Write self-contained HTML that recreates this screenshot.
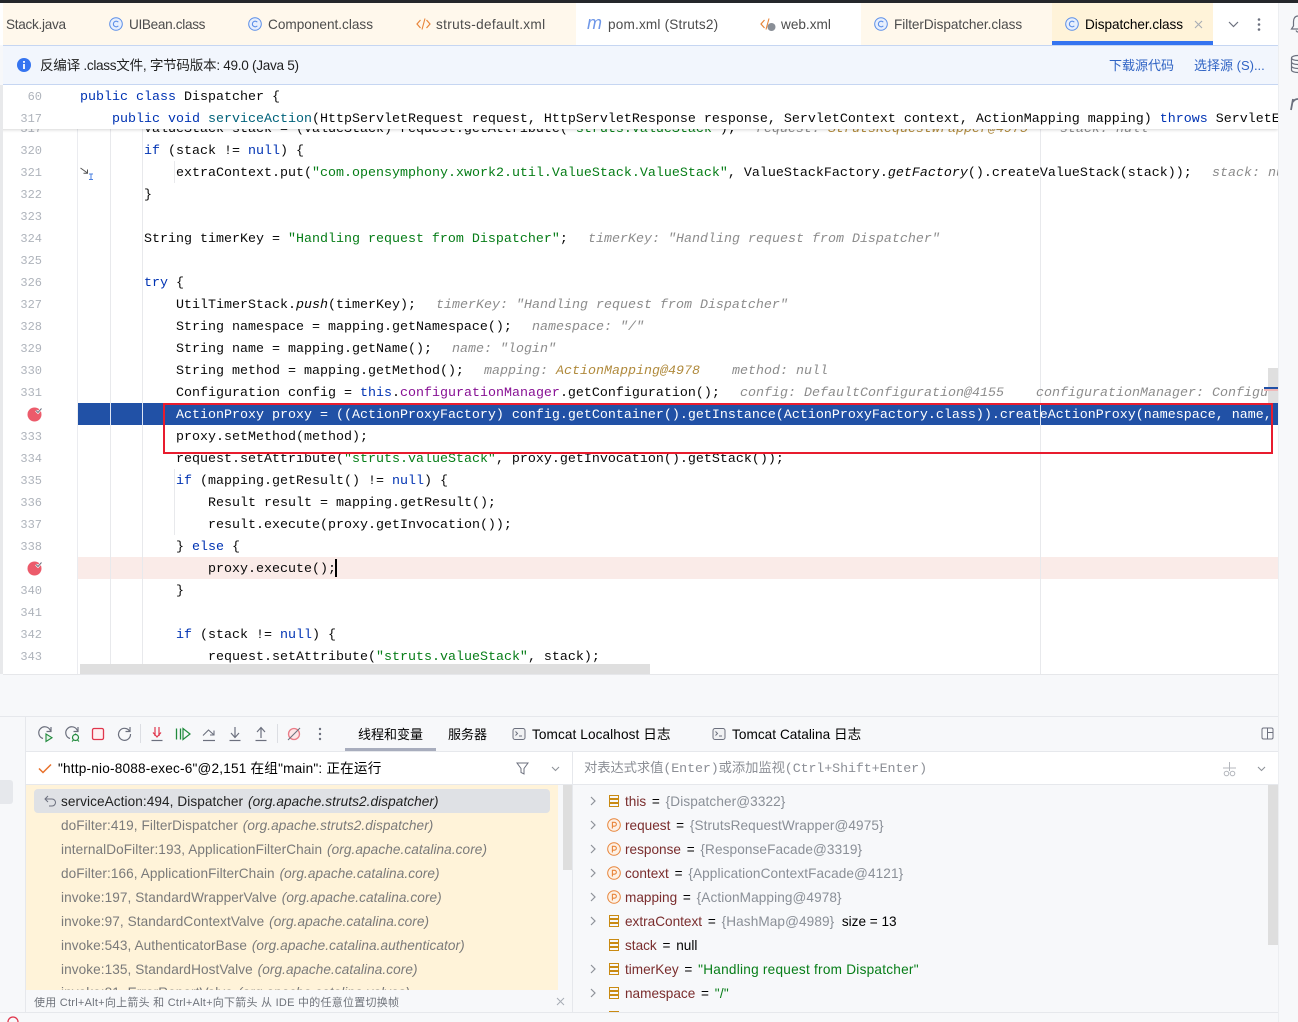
<!DOCTYPE html>
<html><head><meta charset="utf-8"><style>
html,body{margin:0;padding:0}
body{width:1298px;height:1022px;overflow:hidden;position:relative;background:#f7f8fa;font-family:"Liberation Sans","Noto Sans CJK SC",sans-serif;font-size:13.6px;color:#1f1f1f}
.a{position:absolute}
.t{position:absolute;white-space:pre;line-height:20px;height:20px;margin-top:1px}
.c{position:absolute;left:0;white-space:pre;font-family:"Liberation Mono",monospace;font-size:13.333px;line-height:22px;height:22px;color:#080808;margin-top:2px}
.n{position:absolute;left:3px;width:39px;text-align:right;font-family:"Liberation Mono",monospace;font-size:12px;line-height:22px;color:#aeb3bb;margin-top:1px}
.h{position:absolute;font-style:italic;color:#8c8c8c}
.k{color:#0033b3}.s{color:#067d17}.f{color:#871094}.d{color:#00627a}.i{font-style:italic}.o{color:#b08a3c}
.fr{position:absolute;left:61px;white-space:pre;line-height:20px;color:#7a7a7a;margin-top:1px;letter-spacing:.08px}
.fr i{margin-left:1px}
.vr{position:absolute;left:625px;white-space:pre;line-height:20px;color:#000;margin-top:1px}
.vr b{font-weight:normal;color:#7a2d2d;margin-right:2px}.vr u{text-decoration:none;color:#8a8f97;margin-left:2px;letter-spacing:.1px}.vr em{font-style:normal;color:#067d17;margin-left:2px;letter-spacing:.25px}.vr span{margin-left:2px}
svg{position:absolute;overflow:visible}
</style></head><body>
<svg width="0" height="0" style="position:absolute"><defs>
<symbol id="cl" viewBox="0 0 14 14"><circle cx="7" cy="7" r="6.3" fill="#e7effd" stroke="#5b8ee8" stroke-width="1"/><path d="M9.3 5.2A2.8 2.8 0 1 0 9.3 8.8" fill="none" stroke="#5b8ee8" stroke-width="1.1"/></symbol>
<symbol id="fld" viewBox="0 0 14 14"><path d="M2.5 1.5h9v3h-9zM2.5 5.5h9v3h-9zM2.5 9.5h9v3h-9z" fill="none" stroke="#c98a12" stroke-width="1"/></symbol>
<symbol id="par" viewBox="0 0 14 14"><circle cx="7" cy="7" r="6.3" fill="#fdf1e6" stroke="#e8853a" stroke-width="1"/><path d="M5.4 10.5V4.3h2a1.9 1.9 0 0 1 0 3.9h-2" fill="none" stroke="#e8853a" stroke-width="1.1"/></symbol>
<symbol id="chev" viewBox="0 0 10 10"><path d="M3 1l4 4-4 4" fill="none" stroke="#8e9299" stroke-width="1.2"/></symbol>
<symbol id="term" viewBox="0 0 14 14"><rect x="1" y="1.5" width="12" height="11" rx="2" fill="#f0f1f3" stroke="#6c707e"/><path d="M3.5 4.5l2 2-2 2M7 9h3" fill="none" stroke="#6c707e"/></symbol>
<symbol id="bp" viewBox="0 0 16 16"><circle cx="7.5" cy="8.5" r="7" fill="#ec5b6b"/><path d="M9 4.5l2 2 3.5-4" fill="none" stroke="#fff" stroke-width="2.4"/><path d="M9 4.5l2 2 3.5-4" fill="none" stroke="#6c707e" stroke-width="1"/></symbol>
</defs></svg>

<!-- top bar -->
<div class="a" style="left:0;top:0;width:1298px;height:3px;background:#25272b"></div>
<div class="a" style="left:0;top:3px;width:1278px;height:42px;background:#fff"></div>
<div class="a" style="left:3px;top:3px;width:573px;height:42px;background:#fff8ec"></div>
<div class="a" style="left:861px;top:3px;width:191px;height:42px;background:#fff8ec"></div>
<div class="a" style="left:1052px;top:3px;width:161px;height:42px;background:#fff3d9"></div>
<div class="a" style="left:1052px;top:41px;width:161px;height:4px;background:#3574f0"></div>
<div class="a" style="left:3px;top:45px;width:1275px;height:1px;background:#c6d6f2"></div>
<div class="t" style="left:6px;top:14px;color:#4c4c4c;letter-spacing:-.3px">Stack.java</div>
<svg style="left:109px;top:17px" width="14" height="14"><use href="#cl"/></svg><div class="t" style="left:129px;top:14px;color:#4c4c4c;letter-spacing:-.33px">UIBean.class</div>
<svg style="left:248px;top:17px" width="14" height="14"><use href="#cl"/></svg><div class="t" style="left:268px;top:14px;color:#4c4c4c">Component.class</div>
<svg style="left:416px;top:17px" width="15" height="14"><path d="M4.5 3L1 7l3.5 4M10.5 3L14 7l-3.500 4" fill="none" stroke="#e8853a" stroke-width="1.2"/><path d="M9 1.5L6 12.5" stroke="#e8853a" stroke-width="1.1"/></svg><div class="t" style="left:436px;top:14px;color:#4c4c4c;letter-spacing:.33px">struts-default.xml</div>
<div class="t" style="left:587px;top:12px;color:#6f97e8;font-style:italic;font-size:18px">m</div><div class="t" style="left:608px;top:14px;color:#4c4c4c;letter-spacing:.18px">pom.xml (Struts2)</div>
<svg style="left:760px;top:17px" width="17" height="15"><path d="M4.5 3L1 7l3.500 4" fill="none" stroke="#e8853a" stroke-width="1.2"/><path d="M9 1.5L6 12.5" stroke="#e8853a" stroke-width="1.1"/><circle cx="11.500" cy="10" r="4" fill="#8a8f97"/></svg><div class="t" style="left:781px;top:14px;color:#4c4c4c">web.xml</div>
<svg style="left:874px;top:17px" width="14" height="14"><use href="#cl"/></svg><div class="t" style="left:894px;top:14px;color:#4c4c4c;letter-spacing:-.05px">FilterDispatcher.class</div>
<svg style="left:1065px;top:17px" width="14" height="14"><use href="#cl"/></svg><div class="t" style="left:1085px;top:14px;color:#000;letter-spacing:-.06px">Dispatcher.class</div>
<svg style="left:1194px;top:20px" width="9" height="9"><path d="M1 1l7 7M8 1l-7 7" stroke="#a8adb5" stroke-width="1.1"/></svg>
<svg style="left:1228px;top:21px" width="11" height="7"><path d="M1 1l4.500 4.500L10 1" fill="none" stroke="#6c707e" stroke-width="1.2"/></svg>
<svg style="left:1257px;top:17px" width="4" height="15"><circle cx="2" cy="2.500" r="1.300" fill="#6c707e"/><circle cx="2" cy="7.500" r="1.300" fill="#6c707e"/><circle cx="2" cy="12.500" r="1.300" fill="#6c707e"/></svg>

<!-- right stripe -->
<div class="a" style="left:1278px;top:3px;width:20px;height:1019px;background:#f7f8fa;border-left:1px solid #eceef1;box-sizing:border-box"></div>
<svg style="left:1290px;top:15px" width="8" height="100"><path d="M8 1C5 1 3.500 3.500 3.500 6.500v4.500L1.500 14h6.500M6 15.500c.5 1 1 1.500 2 1.500" fill="none" stroke="#6c707e" stroke-width="1.2"/><path d="M8 40.500C4.500 40.500 1.500 41.500 1.500 43v12c0 1.500 3 2.500 6.500 2.500M1.500 43c0 1.500 3 2.500 6.500 2.500M1.500 47c0 1.500 3 2.500 6.500 2.500M1.500 51c0 1.500 3 2.500 6.500 2.500" fill="none" stroke="#6c707e" stroke-width="1.200"/><path d="M1 95l2-11M3 87c1-2 3-3 5-3" fill="none" stroke="#6c707e" stroke-width="1.800"/></svg>

<!-- banner -->
<div class="a" style="left:3px;top:46px;width:1275px;height:38px;background:#f2f6fd"></div>
<div class="a" style="left:3px;top:84px;width:1275px;height:1px;background:#c6d6f2"></div>
<svg style="left:17px;top:58px" width="14" height="14"><circle cx="7" cy="7" r="7" fill="#3574f0"/><rect x="6.100" y="6" width="1.800" height="5" fill="#fff"/><rect x="6.100" y="3" width="1.800" height="1.800" fill="#fff"/></svg>
<div class="t" style="left:40px;top:55px;color:#1f1f1f;letter-spacing:-.3px">反编译 .class文件, 字节码版本: 49.0 (Java 5)</div>
<div class="t" style="left:1109px;top:55px;color:#2f63c4;font-size:13px">下载源代码</div>
<div class="t" style="left:1194px;top:55px;color:#2f63c4;font-size:13px">选择源 (S)...</div>

<!-- editor -->
<div class="a" style="left:0;top:85px;width:3px;height:589px;background:#e8e9eb"></div>
<div id="ed" class="a" style="left:3px;top:85px;width:1275px;height:589px;background:#fff;overflow:hidden;border-bottom:1px solid #e6e7ea;box-sizing:content-box">
<div style="position:absolute;left:-3px;top:-85px;width:1278px;height:1022px">
<div class="a" style="left:78px;top:403px;width:1200px;height:22px;background:#2151a6"></div>
<div class="a" style="left:78px;top:557px;width:1200px;height:22px;background:#faebe8"></div>
<div class="a" style="left:77px;top:85px;width:1px;height:589px;background:#ebecf0"></div>
<div class="a" style="left:110px;top:85px;width:1px;height:589px;background:#e8e9ec"></div>
<div class="a" style="left:142px;top:85px;width:1px;height:589px;background:#e8e9ec"></div>
<div class="a" style="left:174px;top:161px;width:1px;height:22px;background:#e8e9ec"></div>
<div class="a" style="left:174px;top:469px;width:1px;height:66px;background:#e8e9ec"></div>
<div class="a" style="left:1040px;top:85px;width:1px;height:589px;background:#e8e9ec"></div>
<div class="a" style="left:110px;top:403px;width:1px;height:22px;background:#dfe6f5"></div>
<div class="a" style="left:142px;top:403px;width:1px;height:22px;background:#dfe6f5"></div>
<div class="a" style="left:1040px;top:403px;width:1px;height:22px;background:#dfe6f5"></div>

<div class="n" style="top:117px">317</div><div class="c" style="left:144px;top:117px">ValueStack stack = (ValueStack) request.getAttribute(<span class="s">"struts.valueStack"</span>);</div><div class="c h" style="left:756px;top:117px">request: <span class="o">StrutsRequestWrapper@4975</span></div><div class="c h" style="left:1060px;top:117px">stack: null</div>
<div class="n" style="top:139px">320</div><div class="c" style="left:144px;top:139px"><span class="k">if</span> (stack != <span class="k">null</span>) {</div>
<div class="n" style="top:161px">321</div><div class="c" style="left:176px;top:161px">extraContext.put(<span class="s">"com.opensymphony.xwork2.util.ValueStack.ValueStack"</span>, ValueStackFactory.<span class="i">getFactory</span>().createValueStack(stack));</div><div class="c h" style="left:1212px;top:161px">stack: null</div>
<div class="n" style="top:183px">322</div><div class="c" style="left:144px;top:183px">}</div>
<div class="n" style="top:205px">323</div>
<div class="n" style="top:227px">324</div><div class="c" style="left:144px;top:227px">String timerKey = <span class="s">"Handling request from Dispatcher"</span>;</div><div class="c h" style="left:588px;top:227px">timerKey: "Handling request from Dispatcher"</div>
<div class="n" style="top:249px">325</div>
<div class="n" style="top:271px">326</div><div class="c" style="left:144px;top:271px"><span class="k">try</span> {</div>
<div class="n" style="top:293px">327</div><div class="c" style="left:176px;top:293px">UtilTimerStack.<span class="i">push</span>(timerKey);</div><div class="c h" style="left:436px;top:293px">timerKey: "Handling request from Dispatcher"</div>
<div class="n" style="top:315px">328</div><div class="c" style="left:176px;top:315px">String namespace = mapping.getNamespace();</div><div class="c h" style="left:532px;top:315px">namespace: "/"</div>
<div class="n" style="top:337px">329</div><div class="c" style="left:176px;top:337px">String name = mapping.getName();</div><div class="c h" style="left:452px;top:337px">name: "login"</div>
<div class="n" style="top:359px">330</div><div class="c" style="left:176px;top:359px">String method = mapping.getMethod();</div><div class="c h" style="left:484px;top:359px">mapping: <span class="o">ActionMapping@4978</span></div><div class="c h" style="left:732px;top:359px">method: null</div>
<div class="n" style="top:381px">331</div><div class="c" style="left:176px;top:381px">Configuration config = <span class="k">this</span>.<span class="f">configurationManager</span>.getConfiguration();</div><div class="c h" style="left:740px;top:381px">config: DefaultConfiguration@4155</div><div class="c h" style="left:1036px;top:381px">configurationManager: Configuration</div>
<svg style="left:27px;top:406px" width="16" height="16"><use href="#bp"/></svg>
<div class="c" style="left:176px;top:403px;color:#fff">ActionProxy proxy = ((ActionProxyFactory) config.getContainer().getInstance(ActionProxyFactory.class)).createActionProxy(namespace, name,</div>
<div class="n" style="top:425px">333</div><div class="c" style="left:176px;top:425px">proxy.setMethod(method);</div>
<div class="n" style="top:447px">334</div><div class="c" style="left:176px;top:447px">request.setAttribute(<span class="s">"struts.valueStack"</span>, proxy.getInvocation().getStack());</div>
<div class="n" style="top:469px">335</div><div class="c" style="left:176px;top:469px"><span class="k">if</span> (mapping.getResult() != <span class="k">null</span>) {</div>
<div class="n" style="top:491px">336</div><div class="c" style="left:208px;top:491px">Result result = mapping.getResult();</div>
<div class="n" style="top:513px">337</div><div class="c" style="left:208px;top:513px">result.execute(proxy.getInvocation());</div>
<div class="n" style="top:535px">338</div><div class="c" style="left:176px;top:535px">} <span class="k">else</span> {</div>
<svg style="left:27px;top:560px" width="16" height="16"><use href="#bp"/></svg>
<div class="c" style="left:208px;top:557px">proxy.execute();</div>
<div class="a" style="left:335px;top:559px;width:2px;height:18px;background:#000"></div>
<div class="n" style="top:579px">340</div><div class="c" style="left:176px;top:579px">}</div>
<div class="n" style="top:601px">341</div>
<div class="n" style="top:623px">342</div><div class="c" style="left:176px;top:623px"><span class="k">if</span> (stack != <span class="k">null</span>) {</div>
<div class="n" style="top:645px">343</div><div class="c" style="left:208px;top:645px">request.setAttribute(<span class="s">"struts.valueStack"</span>, stack);</div>
<div class="c" style="left:176px;top:667px">}</div>

<svg style="left:80px;top:167px" width="16" height="13"><path d="M0.500 1l7 5M7.500 2.500v3.800h-4" fill="none" stroke="#555" stroke-width="1"/><path d="M9 7h4M9 12.500h4M11 7v5.500" fill="none" stroke="#4a7fe0" stroke-width="1"/></svg>

<!-- sticky -->
<div class="a" style="left:0;top:85px;width:1278px;height:44px;background:#fff;box-shadow:0 1px 3px rgba(0,0,0,.16)"></div>
<div class="n" style="top:85px">60</div><div class="c" style="left:80px;top:85px"><span class="k">public class</span> Dispatcher {</div>
<div class="n" style="top:107px">317</div><div class="c" style="left:112px;top:107px"><span class="k">public void</span> <span class="d">serviceAction</span>(HttpServletRequest request, HttpServletResponse response, ServletContext context, ActionMapping mapping) <span class="k">throws</span> ServletException</div>

<!-- scrollbars -->
<div class="a" style="left:80px;top:664px;width:570px;height:10px;background:#dfdfdf"></div>
<div class="a" style="left:1268px;top:368px;width:10px;height:35px;background:#dfdfdf"></div>
<div class="a" style="left:1264px;top:387px;width:14px;height:2px;background:#2151a6"></div>
<div class="a" style="left:1264px;top:389px;width:14px;height:2px;background:#f0b8b8"></div>

<!-- red box -->
<div class="a" style="left:163px;top:403px;width:1110px;height:51px;border:2px solid #e81c2e;box-sizing:border-box"></div>
</div></div>

<!-- debug panel -->
<div class="a" style="left:0;top:716px;width:1278px;height:1px;background:#e6e8ec"></div>
<div class="a" style="left:25px;top:716px;width:1px;height:296px;background:#e6e8ec"></div>
<div class="a" style="left:0;top:780px;width:13px;height:24px;background:#e6e8ec;border-radius:0 3px 3px 0"></div>
<div class="a" style="left:26px;top:751px;width:1252px;height:1px;background:#e6e8ec"></div>
<div class="a" style="left:26px;top:752px;width:546px;height:32px;background:#fff"></div>
<div class="a" style="left:573px;top:752px;width:705px;height:32px;background:#fff"></div>
<div class="a" style="left:26px;top:784px;width:1252px;height:1px;background:#e6e8ec"></div>
<div class="a" style="left:572px;top:752px;width:1px;height:260px;background:#e6e8ec"></div>

<!-- toolbar icons -->
<svg style="left:38px;top:726px" width="16" height="17"><path d="M12.500 5A6 6 0 1 0 5 12.500" fill="none" stroke="#6c707e" stroke-width="1.2"/><path d="M13 1v4.500H8.500" fill="none" stroke="#6c707e" stroke-width="1.200"/><path d="M8 8l6 3.700L8 15.500z" fill="#e6f4ea" stroke="#208a3c" stroke-width="1.100"/></svg>
<svg style="left:65px;top:726px" width="16" height="17"><path d="M12.500 5A6 6 0 1 0 5 12.500" fill="none" stroke="#6c707e" stroke-width="1.2"/><path d="M13 1v4.500H8.500" fill="none" stroke="#6c707e" stroke-width="1.200"/><circle cx="10.500" cy="11.500" r="3" fill="none" stroke="#208a3c" stroke-width="1.200"/><path d="M7 15.500l1.500-1.500M14 15.500L12.500 14M10.500 7.500v1.500" stroke="#208a3c" stroke-width="1.100"/></svg>
<svg style="left:91px;top:727px" width="14" height="14"><rect x="1.500" y="1.500" width="11" height="11" rx="1.500" fill="#fff0f1" stroke="#e0364c" stroke-width="1.300"/></svg>
<svg style="left:117px;top:726px" width="15" height="15"><path d="M12.500 5A6 6 0 1 0 13.500 8" fill="none" stroke="#6c707e" stroke-width="1.2"/><path d="M13 1v4.500H8.500" fill="none" stroke="#6c707e" stroke-width="1.200"/></svg>
<div class="a" style="left:140px;top:724px;width:1px;height:19px;background:#dcdee3"></div>
<svg style="left:150px;top:726px" width="14" height="16"><path d="M5 1v9M9 1v9M3 6.500L7 11l4-4.500" fill="none" stroke="#e0364c" stroke-width="1.200"/><path d="M1.500 14.500h11" stroke="#6c707e" stroke-width="1.200"/></svg>
<svg style="left:175px;top:727px" width="16" height="14"><path d="M1.500 1.500v11M5.500 1.500v11" fill="none" stroke="#208a3c" stroke-width="1.300"/><path d="M8 1.500L15 7l-7 5.500z" fill="none" stroke="#208a3c" stroke-width="1.200"/></svg>
<svg style="left:202px;top:727px" width="14" height="15"><path d="M1 8.500L6.500 3l5 4.500M12 3.500v4.500H8" fill="none" stroke="#6c707e" stroke-width="1.100"/><path d="M1 13.500h12" stroke="#6c707e" stroke-width="1.200"/></svg>
<svg style="left:228px;top:726px" width="14" height="16"><path d="M7 1v10M3 7l4 4.500L11 7" fill="none" stroke="#6c707e" stroke-width="1.200"/><path d="M1.500 14.500h11" stroke="#6c707e" stroke-width="1.200"/></svg>
<svg style="left:254px;top:726px" width="14" height="16"><path d="M7 12V2M3 6l4-4.500L11 6" fill="none" stroke="#6c707e" stroke-width="1.200"/><path d="M1.500 14.500h11" stroke="#6c707e" stroke-width="1.200"/></svg>
<div class="a" style="left:277px;top:724px;width:1px;height:19px;background:#dcdee3"></div>
<svg style="left:287px;top:727px" width="14" height="14"><circle cx="7" cy="7" r="5.500" fill="#fde5e7" stroke="#ea7c88" stroke-width="1.300"/><path d="M1 13L13 1" stroke="#6c707e" stroke-width="1.100"/></svg>
<svg style="left:318px;top:727px" width="4" height="14"><circle cx="2" cy="2" r="1.200" fill="#6c707e"/><circle cx="2" cy="7" r="1.200" fill="#6c707e"/><circle cx="2" cy="12" r="1.200" fill="#6c707e"/></svg>
<div class="t" style="left:358px;top:724px;color:#000;font-size:13px">线程和变量</div>
<div class="a" style="left:345px;top:748px;width:91px;height:3px;background:#a8adbd"></div>
<div class="t" style="left:448px;top:724px;color:#000;font-size:13px">服务器</div>
<svg style="left:512px;top:727px" width="14" height="14"><use href="#term"/></svg><div class="t" style="left:532px;top:724px;color:#000;letter-spacing:.1px">Tomcat Localhost 日志</div>
<svg style="left:712px;top:727px" width="14" height="14"><use href="#term"/></svg><div class="t" style="left:732px;top:724px;color:#000;letter-spacing:.05px">Tomcat Catalina 日志</div>
<svg style="left:1261px;top:727px" width="13" height="13"><rect x="1" y="1" width="11" height="11" rx="1.500" fill="none" stroke="#6c707e"/><path d="M6.500 1v11M6.500 5.500H12" fill="none" stroke="#6c707e"/></svg>

<!-- thread header -->
<svg style="left:38px;top:763px" width="14" height="11"><path d="M1 5.500l4 4 8-8" fill="none" stroke="#e8702a" stroke-width="1.500"/></svg>
<div class="t" style="left:58px;top:758px;color:#000;letter-spacing:.2px">"http-nio-8088-exec-6"@2,151 在组"main": 正在运行</div>
<svg style="left:516px;top:762px" width="13" height="13"><path d="M1 1h11L8 6.500V12L5 10.500V6.500z" fill="none" stroke="#6c707e"/></svg>
<svg style="left:551px;top:766px" width="9" height="6"><path d="M1 1l3.500 3.500L8 1" fill="none" stroke="#8e9299" stroke-width="1.100"/></svg>

<!-- frames -->
<div class="a" style="left:26px;top:785px;width:532px;height:205px;background:#fff3d9;overflow:hidden">
<div class="a" style="left:8px;top:4px;width:516px;height:24px;background:#dfe1e5;border-radius:4px"></div>
<svg style="left:18px;top:10px" width="13" height="12"><path d="M4 1L1 4l3 3M1 4h7a3.500 3.500 0 0 1 0 7H5" fill="none" stroke="#6c707e" stroke-width="1"/></svg>
<div class="fr" style="left:35px;top:6px;color:#1f1f1f">serviceAction:494, Dispatcher <i>(org.apache.struts2.dispatcher)</i></div>
<div class="fr" style="left:35px;top:30px">doFilter:419, FilterDispatcher <i>(org.apache.struts2.dispatcher)</i></div>
<div class="fr" style="left:35px;top:54px">internalDoFilter:193, ApplicationFilterChain <i>(org.apache.catalina.core)</i></div>
<div class="fr" style="left:35px;top:78px">doFilter:166, ApplicationFilterChain <i>(org.apache.catalina.core)</i></div>
<div class="fr" style="left:35px;top:102px">invoke:197, StandardWrapperValve <i>(org.apache.catalina.core)</i></div>
<div class="fr" style="left:35px;top:126px">invoke:97, StandardContextValve <i>(org.apache.catalina.core)</i></div>
<div class="fr" style="left:35px;top:150px">invoke:543, AuthenticatorBase <i>(org.apache.catalina.authenticator)</i></div>
<div class="fr" style="left:35px;top:174px">invoke:135, StandardHostValve <i>(org.apache.catalina.core)</i></div>
<div class="fr" style="left:35px;top:197px">invoke:81, ErrorReportValve <i>(org.apache.catalina.valves)</i></div>
</div>
<div class="a" style="left:563px;top:785px;width:9px;height:85px;background:#dedede"></div>
<div class="t" style="left:34px;top:992px;font-size:11px;color:#6f737b;letter-spacing:.25px">使用 Ctrl+Alt+向上箭头 和 Ctrl+Alt+向下箭头 从 IDE 中的任意位置切换帧</div>
<svg style="left:556px;top:997px" width="9" height="9"><path d="M1 1l7 7M8 1l-7 7" stroke="#a8adb5" stroke-width="1"/></svg>

<!-- watches -->
<div class="t" style="left:584px;top:759px;font-family:'Liberation Mono','Noto Sans CJK SC',monospace;font-size:13.333px;color:#8c8f96;letter-spacing:-.1px">对表达式求值(Enter)或添加监视(Ctrl+Shift+Enter)</div>
<svg style="left:1222px;top:761px" width="15" height="16"><path d="M7.500 1v9M1 7h13" stroke="#b4b7bd"/><circle cx="4.500" cy="12.500" r="2.300" fill="none" stroke="#b4b7bd"/><circle cx="10.500" cy="12.500" r="2.300" fill="none" stroke="#b4b7bd"/></svg>
<svg style="left:1257px;top:766px" width="9" height="6"><path d="M1 1l3.500 3.500L8 1" fill="none" stroke="#8e9299" stroke-width="1.100"/></svg>

<div class="a" style="left:573px;top:785px;width:705px;height:227px;overflow:hidden">
<div class="a" style="left:695px;top:0;width:10px;height:160px;background:#dedede"></div>
<svg style="left:15px;top:11px" width="10" height="10"><use href="#chev"/></svg>
<svg style="left:15px;top:35px" width="10" height="10"><use href="#chev"/></svg>
<svg style="left:15px;top:59px" width="10" height="10"><use href="#chev"/></svg>
<svg style="left:15px;top:83px" width="10" height="10"><use href="#chev"/></svg>
<svg style="left:15px;top:107px" width="10" height="10"><use href="#chev"/></svg>
<svg style="left:15px;top:131px" width="10" height="10"><use href="#chev"/></svg>
<svg style="left:15px;top:179px" width="10" height="10"><use href="#chev"/></svg>
<svg style="left:15px;top:203px" width="10" height="10"><use href="#chev"/></svg>
<svg style="left:34px;top:9px" width="14" height="14"><use href="#fld"/></svg>
<svg style="left:34px;top:33px" width="14" height="14"><use href="#par"/></svg>
<svg style="left:34px;top:57px" width="14" height="14"><use href="#par"/></svg>
<svg style="left:34px;top:81px" width="14" height="14"><use href="#par"/></svg>
<svg style="left:34px;top:105px" width="14" height="14"><use href="#par"/></svg>
<svg style="left:34px;top:129px" width="14" height="14"><use href="#fld"/></svg>
<svg style="left:34px;top:153px" width="14" height="14"><use href="#fld"/></svg>
<svg style="left:34px;top:177px" width="14" height="14"><use href="#fld"/></svg>
<svg style="left:34px;top:201px" width="14" height="14"><use href="#fld"/></svg>
<svg style="left:34px;top:225px" width="14" height="14"><use href="#fld"/></svg>
<div class="vr" style="left:52px;top:6px"><b>this</b> = <u>{Dispatcher@3322}</u></div>
<div class="vr" style="left:52px;top:30px"><b>request</b> = <u>{StrutsRequestWrapper@4975}</u></div>
<div class="vr" style="left:52px;top:54px"><b>response</b> = <u>{ResponseFacade@3319}</u></div>
<div class="vr" style="left:52px;top:78px"><b>context</b> = <u>{ApplicationContextFacade@4121}</u></div>
<div class="vr" style="left:52px;top:102px"><b>mapping</b> = <u>{ActionMapping@4978}</u></div>
<div class="vr" style="left:52px;top:126px"><b>extraContext</b> = <u>{HashMap@4989}</u>  size = 13</div>
<div class="vr" style="left:52px;top:150px"><b>stack</b> = <span>null</span></div>
<div class="vr" style="left:52px;top:174px"><b>timerKey</b> = <em>"Handling request from Dispatcher"</em></div>
<div class="vr" style="left:52px;top:198px"><b>namespace</b> = <em>"/"</em></div>
</div>

<!-- bottom -->
<div class="a" style="left:0;top:1012px;width:1278px;height:1px;background:#e6e8ec"></div>
<div class="a" style="left:0;top:1013px;width:1278px;height:9px;background:#f7f8fa"></div>
<svg style="left:7px;top:1019px" width="12" height="3"><path d="M1 3a5 5 0 0 1 10 0" fill="none" stroke="#e0364c" stroke-width="1.300"/></svg>
</body></html>
